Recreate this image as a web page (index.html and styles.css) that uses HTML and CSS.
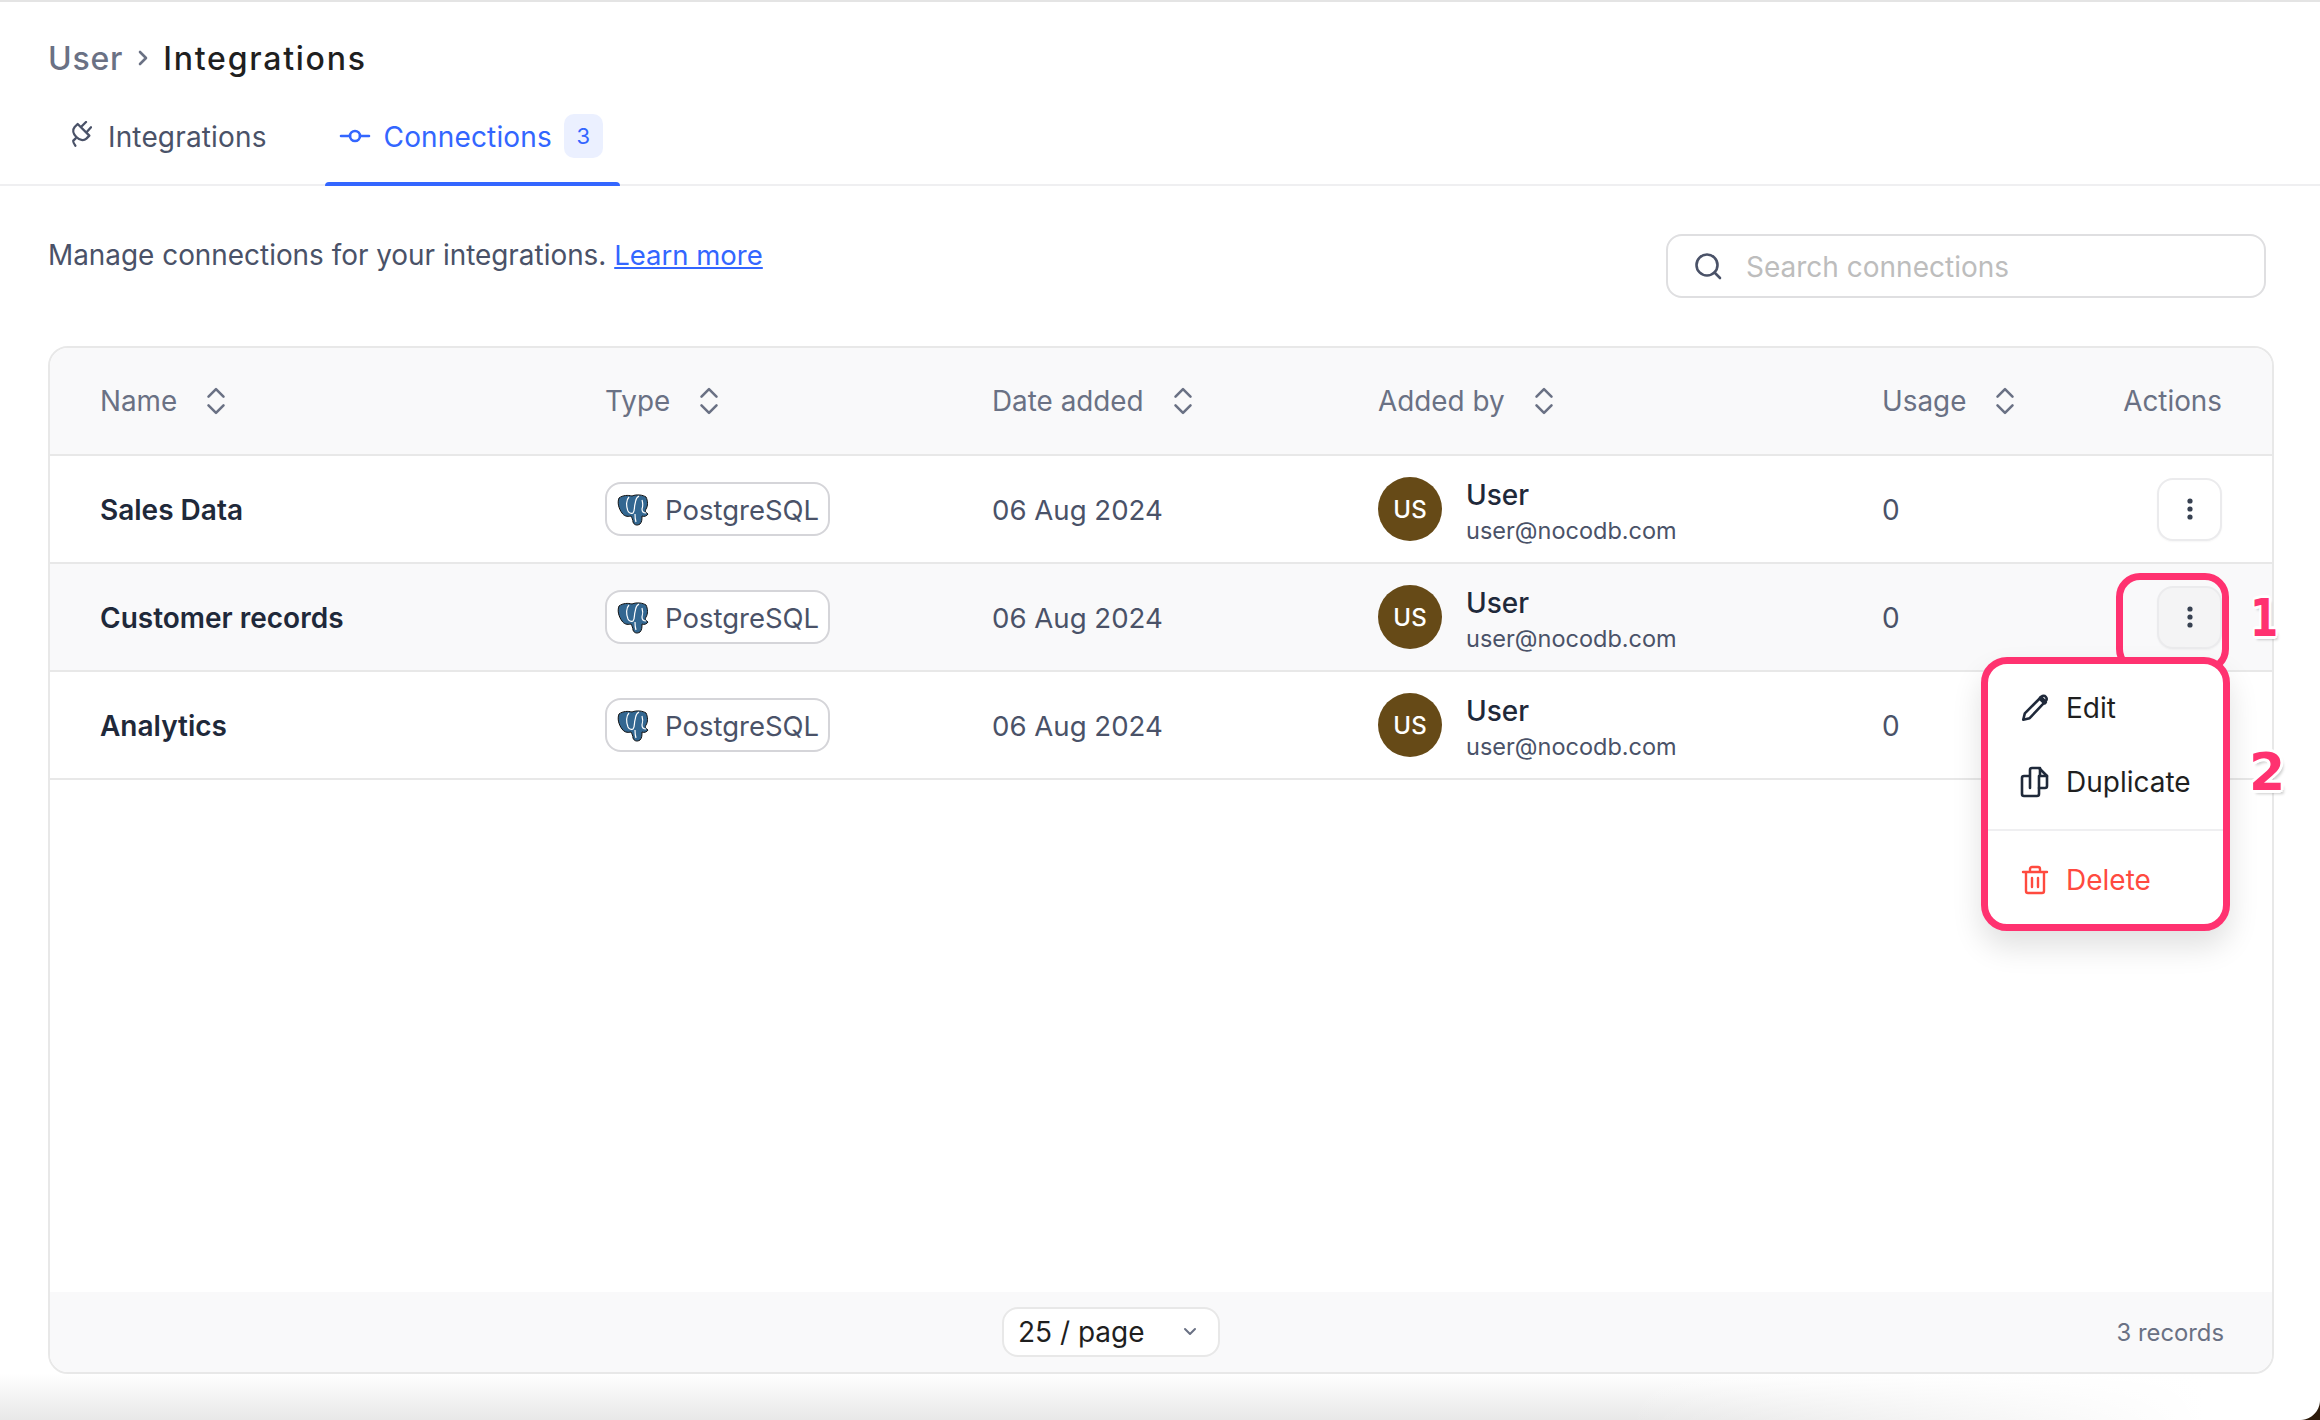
FILE: index.html
```html
<!DOCTYPE html>
<html lang="en">
<head>
  <meta charset="UTF-8" />
  <title>Integrations</title>
  <link rel="stylesheet" href="styles.css">
</head>
<body>
  <div class="page">
    <div class="breadcrumb">
      <span class="crumb-parent">User</span>
      <svg class="crumb-sep" viewBox="0 0 12 20"><path d="M3 4l6 6-6 6" fill="none" stroke="#6a7184" stroke-width="2.600" stroke-linecap="round" stroke-linejoin="round"/></svg>
      <span class="crumb-current">Integrations</span>
    </div>

    <div class="tabs">
      <div class="tab">
        <svg class="tab-icon plug" viewBox="0 0 63 78" fill="none" stroke="#4a5268" stroke-width="7" stroke-linecap="round" stroke-linejoin="round">
          <path d="M33 15L45 3M48 32L60 19"/>
          <path d="M20 9L55 44L46 53C38 60 26 58 16 48C6 38 4 26 11 18Z"/>
          <path d="M14 52L7 59C5 62 9 68 13 74"/>
        </svg>
        <span>Integrations</span>
      </div>
      <div class="tab tab-active">
        <svg class="tab-icon link" viewBox="0 0 32 16" fill="none" stroke="#3366ff" stroke-width="2.600" stroke-linecap="round">
          <circle cx="16" cy="8" r="5"/>
          <path d="M2 8h9M21 8h9"/>
        </svg>
        <span>Connections</span>
        <span class="badge">3</span>
      </div>
    </div>

    <div class="toolbar">
      <p class="intro">Manage connections for your integrations. <a class="learn" href="#">Learn more</a></p>
      <div class="search">
        <svg class="search-icon" viewBox="0 0 28 28" fill="none" stroke="#4a5268" stroke-width="2.600" stroke-linecap="round"><circle cx="13" cy="13" r="10.500"/><path d="M20.500 20.500l5.500 5.500"/></svg>
        <span class="search-text">Search connections</span>
      </div>
    </div>

    <div class="table">
      <div class="row head">
        <div class="th">Name <svg class="sort" viewBox="0 0 20 28"><path d="M3 10l7-7 7 7M3 18l7 7 7-7"/></svg></div>
        <div class="th">Type <svg class="sort" viewBox="0 0 20 28"><path d="M3 10l7-7 7 7M3 18l7 7 7-7"/></svg></div>
        <div class="th">Date added <svg class="sort" viewBox="0 0 20 28"><path d="M3 10l7-7 7 7M3 18l7 7 7-7"/></svg></div>
        <div class="th">Added by <svg class="sort" viewBox="0 0 20 28"><path d="M3 10l7-7 7 7M3 18l7 7 7-7"/></svg></div>
        <div class="th th-split"><span class="th">Usage <svg class="sort" viewBox="0 0 20 28"><path d="M3 10l7-7 7 7M3 18l7 7 7-7"/></svg></span><span>Actions</span></div>
      </div>

      <div class="row">
        <div class="name">Sales Data</div>
        <div><span class="chip"><svg class="pg" viewBox="0 0 32 32"><use href="#elephant"/></svg>PostgreSQL</span></div>
        <div class="date">06 Aug 2024</div>
        <div class="user"><span class="avatar">US</span><span class="user-text"><b>User</b><small>user@nocodb.com</small></span></div>
        <div class="usage"><span class="count">0</span><button class="more"><svg viewBox="0 0 6 22"><circle cx="3" cy="3" r="2.600"/><circle cx="3" cy="11" r="2.600"/><circle cx="3" cy="19" r="2.600"/></svg></button></div>
      </div>

      <div class="row row-hover">
        <div class="name">Customer records</div>
        <div><span class="chip"><svg class="pg" viewBox="0 0 32 32"><use href="#elephant"/></svg>PostgreSQL</span></div>
        <div class="date">06 Aug 2024</div>
        <div class="user"><span class="avatar">US</span><span class="user-text"><b>User</b><small>user@nocodb.com</small></span></div>
        <div class="usage"><span class="count">0</span><button class="more more-hover"><svg viewBox="0 0 6 22"><circle cx="3" cy="3" r="2.600"/><circle cx="3" cy="11" r="2.600"/><circle cx="3" cy="19" r="2.600"/></svg></button></div>
      </div>

      <div class="row">
        <div class="name">Analytics</div>
        <div><span class="chip"><svg class="pg" viewBox="0 0 32 32"><use href="#elephant"/></svg>PostgreSQL</span></div>
        <div class="date">06 Aug 2024</div>
        <div class="user"><span class="avatar">US</span><span class="user-text"><b>User</b><small>user@nocodb.com</small></span></div>
        <div class="usage"><span class="count">0</span></div>
      </div>

      <div class="table-fill"></div>

      <div class="table-foot">
        <div class="page-size">25 / page
          <svg class="caret" viewBox="0 0 14 10"><path d="M2 2l5 5 5-5" fill="none" stroke="#6a7184" stroke-width="2" stroke-linecap="round" stroke-linejoin="round"/></svg>
        </div>
        <span class="records">3 records</span>
      </div>
    </div>
  </div>

  <!-- annotations over the screenshot -->
  <div class="mark mark-one"></div>
  <div class="menu">
    <div class="menu-item">
      <svg class="menu-icon" viewBox="0 0 28 28" fill="none" stroke="#1f293a" stroke-width="2.400" stroke-linecap="round" stroke-linejoin="round"><path d="M3 25l1.500-6L20 3.500c1.200-1.200 3-1.200 4 0s1.200 2.800 0 4L9 23.500z"/><path d="M19.500 5l3.500 3.500" stroke-width="4.500"/></svg>
      <span>Edit</span>
    </div>
    <div class="menu-item">
      <svg class="menu-icon icon-copy" viewBox="0 0 30 32" fill="none" stroke="#1f293a" stroke-width="2.600" stroke-linecap="round" stroke-linejoin="round"><path d="M19 10v18a2 2 0 0 1-2 2H4a2 2 0 0 1-2-2V12a2 2 0 0 1 2-2h5"/><path d="M10 22V4a2 2 0 0 1 2-2h7l8 8v10a2 2 0 0 1-2 2h-6"/><path d="M20 2v8h7"/></svg>
      <span>Duplicate</span>
    </div>
    <div class="menu-line"></div>
    <div class="menu-item item-danger">
      <svg class="menu-icon" viewBox="0 0 28 30" fill="none" stroke="#ff4a3f" stroke-width="2.400" stroke-linecap="round" stroke-linejoin="round"><path d="M2 7h24M9 7V4a2 2 0 0 1 2-2h6a2 2 0 0 1 2 2v3M5 7v19a2 2 0 0 0 2 2h14a2 2 0 0 0 2-2V7M11 13v9M17 13v9"/></svg>
      <span>Delete</span>
    </div>
  </div>
  <span class="digit digit-one">1</span>
  <span class="digit digit-two">2</span>

  <div class="window-shade"></div>
  <div class="window-corner"></div>

  <svg class="defs" width="0" height="0">
    <symbol id="elephant" viewBox="0 0 32 32">
      <path d="M2 4C6 1 11 1 15 2C20 0 26 1 29 3C31 7 31 12 29 15C28 17 28 18 31 20C30 22 27 23 25 22C25 25 25 28 23 30C20 32 17 31 16 28C16 26 15 24 14 22C10 23 7 22 5 19C2 15 0 9 2 4Z" fill="#336791" stroke="#111" stroke-width="1"/>
      <path d="M12 3C9 6 9 12 11 17C12 19 14 20 16 19C18 17 17 13 18 10C19 7 18 4 22 2M18 20C18 23 18 25 19 28M25 6C26 9 26 12 25 15C25 18 27 19 29 19" fill="none" stroke="#fff" stroke-width="1.200"/>
    </symbol>
  </svg>
</body>
</html>
```

FILE: styles.css
```css
* {
  box-sizing: border-box;
}
html, body {
  margin: 0;
  height: 100%;
}
body {
  width: 2320px;
  height: 1420px;
  position: relative;
  overflow: hidden;
  background: #fff;
  font-family: Inter, "Noto Sans", sans-serif;
  color: #1f293a;
  border-top: 2px solid #e4e4e4;
}
.page {
  display: flex;
  flex-direction: column;
  height: 1372px;
}

/* breadcrumb */
.breadcrumb {
  display: flex;
  align-items: center;
  gap: 14px;
  height: 56px;
  margin-top: 28px;
  padding-left: 48px;
  font-size: 32px;
  font-weight: 500;
  letter-spacing: 0.8px;
}
.crumb-parent {
  color: #6a7184;
}
.crumb-sep {
  width: 12px;
  height: 20px;
}
.crumb-current {
  color: #1f1f1f;
  letter-spacing: 1.75px;
}

/* tabs */
.tabs {
  display: flex;
  align-items: stretch;
  height: 100px;
  padding-left: 48px;
  border-bottom: 2px solid #efeff1;
}
.tab {
  position: relative;
  display: flex;
  align-items: center;
  gap: 16px;
  padding: 2px 58px 0 23px;
  margin-bottom: -2px;
  font-size: 28px;
  letter-spacing: 0.15px;
  color: #4a5268;
}
.tab-active {
  gap: 13px;
  padding: 2px 17px 0 14px;
  color: #3366ff;
}
.tab-active::after {
  content: "";
  position: absolute;
  left: 0;
  right: 0;
  bottom: 0;
  height: 4px;
  border-radius: 4px 4px 0 0;
  background: #3366ff;
}
.tab-icon.plug {
  width: 21px;
  height: 26px;
  margin-top: -6px;
}
.tab-icon.link {
  width: 32px;
  height: 16px;
  margin-top: -2px;
}
.badge {
  display: flex;
  align-items: center;
  justify-content: center;
  width: 39px;
  height: 44px;
  margin: -2px 0 0 -1px;
  border-radius: 10px;
  background: #ebf0ff;
  font-size: 22px;
}

/* toolbar */
.toolbar {
  display: flex;
  justify-content: space-between;
  align-items: flex-start;
  padding: 48px 54px 0 48px;
  height: 160px;
}
.intro {
  margin: 1px 0 0;
  font-size: 27.900px;
  line-height: 40px;
  color: #4a5268;
}
.learn {
  font-size: 27.500px;
  color: #3366ff;
}
.search {
  display: flex;
  align-items: center;
  gap: 24px;
  width: 600px;
  height: 64px;
  padding-left: 26px;
  border: 2px solid #dfdfe1;
  border-radius: 16px;
}
.search-icon {
  width: 28px;
  height: 28px;
}
.search-text {
  padding-top: 2px;
  font-size: 28px;
  color: #bdbdbd;
}

/* table */
.table {
  flex: 1;
  display: flex;
  flex-direction: column;
  margin: 0 46px 0 48px;
  border: 2px solid #e8e8e8;
  border-radius: 20px;
  overflow: hidden;
}
.row {
  display: grid;
  grid-template-columns: 505px 387px 386px 504px 1fr;
  align-items: center;
  flex: none;
  height: 108px;
  padding: 0 50px;
  border-bottom: 2px solid #e8e8e8;
  font-size: 28px;
  color: #4a5268;
}
.head {
  background: #f9f9fa;
  color: #6a7184;
}
.row-hover {
  background: #f9f9fa;
}
.th {
  display: flex;
  align-items: center;
  gap: 28px;
  font-size: 27.850px;
}
.th-split {
  justify-content: space-between;
}
.sort {
  width: 22px;
  height: 30px;
  fill: none;
  stroke: #6a7184;
  stroke-width: 2.400;
  stroke-linecap: round;
  stroke-linejoin: round;
}
.name {
  padding-top: 2px;
  font-weight: 600;
  color: #1f293a;
}
.date {
  padding-top: 2px;
  font-size: 27.600px;
}
.chip {
  display: inline-flex;
  align-items: center;
  gap: 16px;
  height: 54px;
  padding: 2px 9px 0 10px;
  border: 2px solid #d5d5d9;
  border-radius: 16px;
  background: #fff;
  font-size: 27.500px;
}
.pg {
  width: 32px;
  height: 32px;
}
.user {
  display: flex;
  align-items: center;
  gap: 24px;
}
.avatar {
  display: flex;
  align-items: center;
  justify-content: center;
  width: 64px;
  height: 64px;
  border-radius: 50%;
  background: #664a17;
  color: #fff;
  font-size: 24px;
  font-weight: 500;
}
.user-text {
  display: flex;
  flex-direction: column;
  margin-top: 7px;
}
.user-text b {
  font-size: 28px;
  line-height: 36px;
  font-weight: 500;
  color: #1f293a;
}
.user-text small {
  font-size: 23.500px;
  line-height: 36px;
  color: #4a5268;
}
.usage {
  display: flex;
  align-items: center;
  justify-content: space-between;
}
.count {
  padding-top: 2px;
}
.more {
  display: flex;
  align-items: center;
  justify-content: center;
  width: 65px;
  height: 63px;
  padding: 0;
  background: #fff;
  border: 2px solid #ebebed;
  border-radius: 16px;
  box-shadow: 0 1px 2px rgba(0,0,0,0.04);
}
.more svg {
  width: 6px;
  height: 22px;
  fill: #374151;
}
.more-hover {
  background: #f4f4f5;
}
.table-fill {
  flex: 1;
}
.table-foot {
  position: relative;
  display: flex;
  align-items: center;
  justify-content: flex-end;
  flex: none;
  height: 80px;
  padding-right: 48px;
  background: #f9f9fa;
}
.page-size {
  position: absolute;
  left: 952px;
  top: 15px;
  display: flex;
  align-items: center;
  justify-content: space-between;
  width: 218px;
  height: 50px;
  padding: 0 21px 0 14px;
  background: #fff;
  border: 2px solid #e8e8e8;
  border-radius: 16px;
  font-size: 28px;
  color: #1f1f1f;
}
.caret {
  width: 14px;
  height: 10px;
}
.records {
  font-size: 23.800px;
  color: #6a7184;
}

/* dropdown and pink marks lie over the table */
.mark {
  position: absolute;
  border: 7px solid #ff3270;
}
.mark-one {
  left: 2116px;
  top: 571px;
  width: 113px;
  height: 100px;
  border-radius: 24px;
}
.menu {
  position: absolute;
  left: 1981px;
  top: 655px;
  width: 249px;
  height: 274px;
  padding-top: 7px;
  background: #fff;
  border: 7px solid #ff3270;
  border-radius: 26px;
  box-shadow: 0 16px 30px rgba(0,0,0,0.12);
}
.menu-item {
  display: flex;
  align-items: center;
  gap: 16px;
  height: 74px;
  padding-left: 32px;
  font-size: 28px;
  color: #1f1f1f;
}
.menu-line {
  height: 2px;
  margin: 10px 0 12px;
  background: #efeff1;
}
.item-danger {
  height: 74px;
  color: #ff4a3f;
}
.menu-icon {
  width: 30px;
  height: 30px;
}
.icon-copy {
  height: 34px;
}
.digit {
  position: absolute;
  font-family: "DejaVu Sans", sans-serif;
  font-weight: 700;
  font-size: 52px;
  line-height: 1;
  color: #ff3270;
  text-shadow: -3px 0 #fff, 3px 0 #fff, 0 -3px #fff, 0 3px #fff, -2px -2px #fff, 2px -2px #fff, -2px 2px #fff, 2px 2px #fff, 3px 4px 3px rgba(0,0,0,0.2);
}
.digit-one {
  left: 2246px;
  top: 590px;
  transform: scaleX(0.78);
}
.digit-two {
  left: 2249px;
  top: 744px;
}

/* bottom edge of the captured window */
.window-shade {
  position: absolute;
  left: 0;
  right: 0;
  bottom: 0;
  height: 46px;
  background: linear-gradient(to right, transparent 70%, #fff 95%), linear-gradient(#fff, #e8e8e8);
}
.window-corner {
  position: absolute;
  right: 0;
  bottom: 0;
  width: 20px;
  height: 20px;
  background: radial-gradient(circle at 0 0, transparent 19.500px, #2c1a0a 20.500px);
}
.defs {
  position: absolute;
}
```
